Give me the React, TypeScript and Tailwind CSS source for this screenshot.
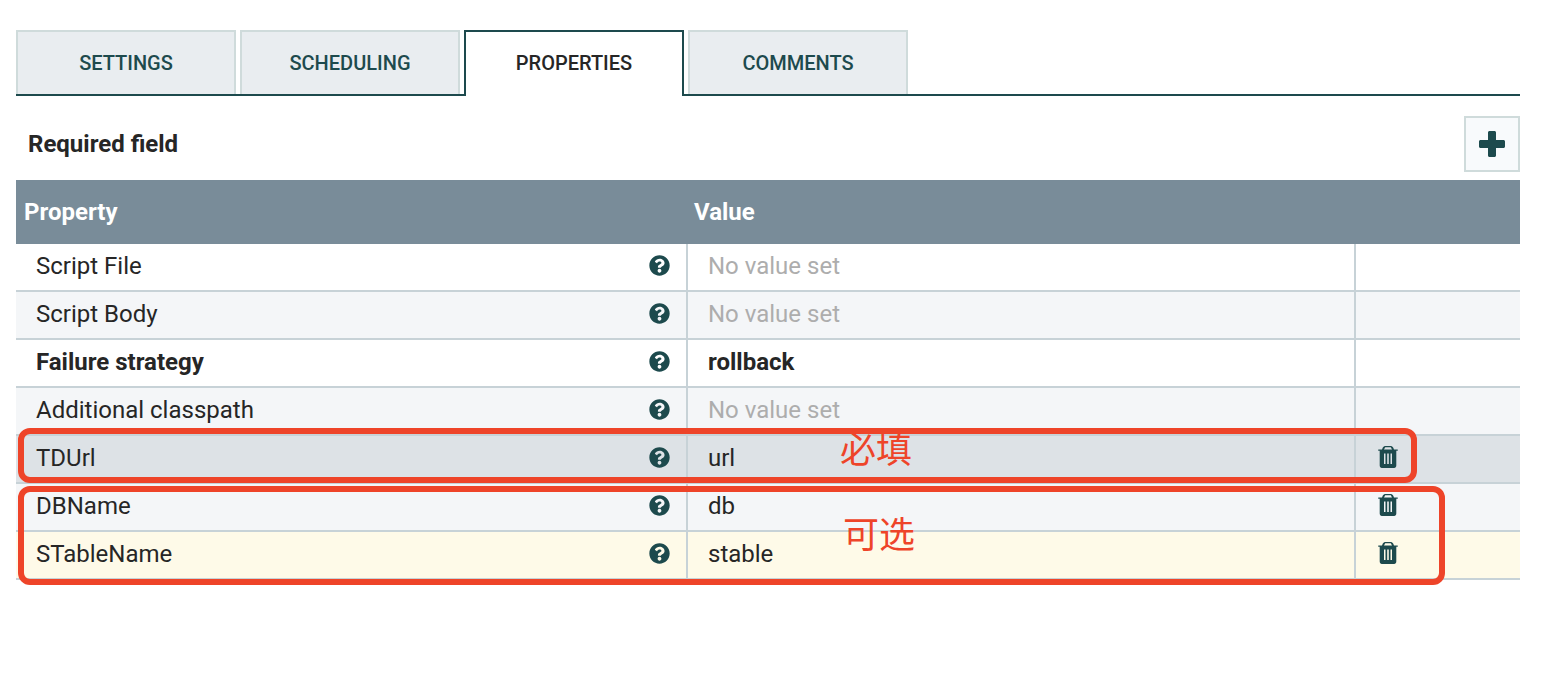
import React from "react";
import { FaQuestionCircle } from "react-icons/fa";

const tabs = ["SETTINGS", "SCHEDULING", "PROPERTIES", "COMMENTS"];

const rows = [
  { name: "Script File", value: "", bg: "bg-white" },
  { name: "Script Body", value: "", bg: "bg-[#f4f6f8]" },
  { name: "Failure strategy", value: "rollback", bg: "bg-white", bold: true },
  { name: "Additional classpath", value: "", bg: "bg-[#f4f6f8]" },
  { name: "TDUrl", value: "url", bg: "bg-[#dde2e6]", trash: true },
  { name: "DBName", value: "db", bg: "bg-[#f4f6f8]", trash: true },
  { name: "STableName", value: "stable", bg: "bg-[#fefae8]", trash: true },
];

function TrashIcon() {
  return (
    <svg width="20" height="22" viewBox="0 0 20 22" className="-mt-0.5 text-[#1d4a4d]">
      <path
        fill="currentColor"
        fillRule="evenodd"
        d="M7 0h6c1 0 2 1 2.400 2L16 3.500h3.300c.4 0 .7.300.7.600s-.3.600-.7.600H18.300V19.500c0 1.300-.9 2.500-2.100 2.500H3.800c-1.200 0-2.100-1.200-2.100-2.500V4.700H.7C.3 4.700 0 4.400 0 4.100s.3-.6.700-.6H4L4.600 2C5 1 6 0 7 0ZM7.200 1.300 6 3.500h8l-1.200-2.200ZM6 7.500v10.500h1.500V7.500ZM9.200 7.500v10.500h1.600V7.500ZM12.500 7.500v10.500H14V7.500Z"
      />
    </svg>
  );
}

function PlusIcon() {
  return (
    <svg width="26" height="26" viewBox="0 0 26 26" className="text-[#1d4a4d]">
      <path
        fill="currentColor"
        d="M10.500 0h5c.8 0 1.500.7 1.500 1.500V9h7.500c.8 0 1.500.7 1.500 1.500v5c0 .8-.7 1.500-1.500 1.500H17v7.500c0 .8-.7 1.500-1.500 1.500h-5c-.8 0-1.500-.7-1.500-1.500V17H1.500C.7 17 0 16.300 0 15.500v-5C0 9.700.7 9 1.500 9H9V1.500C9 .7 9.700 0 10.500 0Z"
      />
    </svg>
  );
}

export default function App() {
  return (
    <div className="relative h-[688px] overflow-hidden bg-white px-4 pt-[30px] font-['Roboto',sans-serif] text-[#262626]">
      <div className="flex h-[66px] w-[1504px] gap-1 border-b-2 border-[#1d4a4d]">
        {tabs.map((tab) =>
          tab === "PROPERTIES" ? (
            <div
              key={tab}
              className="-mb-0.5 flex h-[66px] w-[220px] items-center justify-center border-2 border-b-0 border-[#1d4a4d] bg-white pb-0.5 text-[20px] font-medium"
            >
              {tab}
            </div>
          ) : (
            <div
              key={tab}
              className="flex h-[64px] w-[220px] items-center justify-center border-2 border-b-0 border-[#cfdbdb] bg-[#e9edf0] text-[20px] font-medium text-[#1d4a4d]"
            >
              {tab}
            </div>
          ),
        )}
      </div>

      <div className="flex h-[84px] w-[1504px] items-start justify-between pt-5">
        <div className="pt-4 pl-3 text-[24px] leading-none font-bold">Required field</div>
        <div className="flex h-14 w-14 items-center justify-center border-2 border-[#cfdbdb] bg-[#f8fafc]">
          <PlusIcon />
        </div>
      </div>

      <div className="w-[1504px]">
        <div className="flex h-16 items-center bg-[#798c99] text-[24px] font-bold text-white">
          <div className="w-[670px] pl-2">Property</div>
          <div className="pl-2">Value</div>
        </div>
        {rows.map((row) => (
          <div key={row.name} className={`flex h-12 border-b-2 border-[#c7d2d7] text-[24px] ${row.bg}`}>
            <div className={`flex w-[672px] items-center justify-between border-r-2 border-[#c7d2d7] pr-4 pb-0.5 pl-5 ${row.bold ? "font-bold" : ""}`}>
              <span>{row.name}</span>
              <FaQuestionCircle size={21} className="-mt-0.5 text-[#1d4a4d]" />
            </div>
            <div className={`flex w-[668px] items-center border-r-2 border-[#c7d2d7] pb-0.5 pl-5 ${row.bold ? "font-bold" : ""}`}>
              {row.value ? row.value : <span className="text-[#adadad]">No value set</span>}
            </div>
            <div className="flex flex-1 items-center pb-0.5 pl-[22px]">{row.trash && <TrashIcon />}</div>
          </div>
        ))}
      </div>

      {/* red markup drawn over the table */}
      <div className="absolute top-[428px] left-[18px] h-[55px] w-[1399px] rounded-xl border-[6px] border-[#ee4429]" />
      <div className="absolute top-[486px] left-[18px] h-[99px] w-[1427px] rounded-xl border-[6px] border-[#ee4429]" />
      <div className="absolute top-[425px] left-[840px] font-['Noto_Sans_CJK_SC',sans-serif] text-[36px] leading-[44px] text-[#ee4429]">必填</div>
      <div className="absolute top-[510px] left-[843px] font-['Noto_Sans_CJK_SC',sans-serif] text-[36px] leading-[44px] text-[#ee4429]">可选</div>
    </div>
  );
}
